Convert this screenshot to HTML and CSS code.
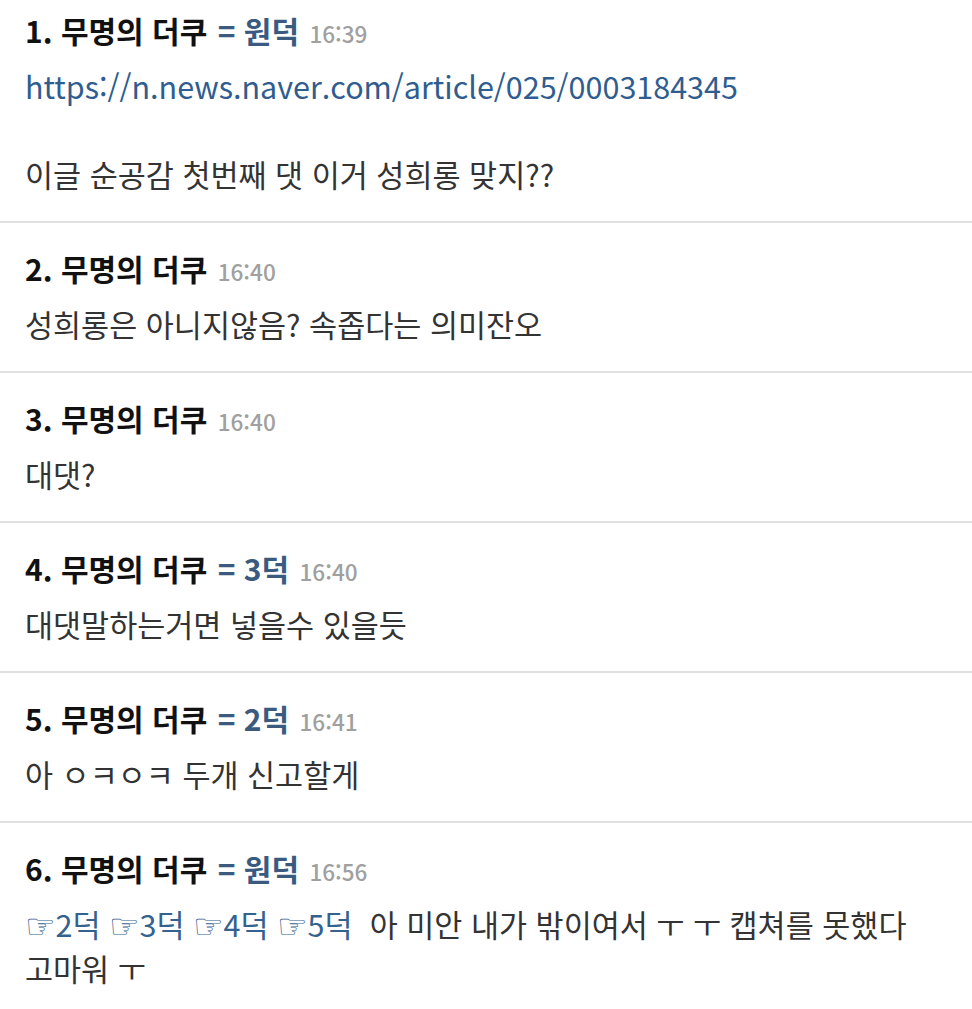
FILE: index.html
```html
<!DOCTYPE html>
<html lang="ko">
<head>
<meta charset="utf-8">
<link rel="stylesheet" href="styles.css">
</head>
<body>
<div class="list">
  <div class="post">
    <div class="head"><span class="no">1. 무명의 더쿠</span> <span class="nick">= 원덕</span> <span class="time">16:39</span></div>
    <div class="body">
      <a class="link" href="#">https://n.news.naver.com/article/025/0003184345</a><br><br>
      이글 순공감 첫번째 댓 이거 성희롱 맞지??
    </div>
  </div>
  <div class="post">
    <div class="head"><span class="no">2. 무명의 더쿠</span> <span class="time">16:40</span></div>
    <div class="body">성희롱은 아니지않음? 속좁다는 의미잔오</div>
  </div>
  <div class="post">
    <div class="head"><span class="no">3. 무명의 더쿠</span> <span class="time">16:40</span></div>
    <div class="body">대댓?</div>
  </div>
  <div class="post">
    <div class="head"><span class="no">4. 무명의 더쿠</span> <span class="nick">= 3덕</span> <span class="time">16:40</span></div>
    <div class="body">대댓말하는거면 넣을수 있을듯</div>
  </div>
  <div class="post">
    <div class="head"><span class="no">5. 무명의 더쿠</span> <span class="nick">= 2덕</span> <span class="time">16:41</span></div>
    <div class="body">아 ㅇㅋㅇㅋ 두개 신고할게</div>
  </div>
  <div class="post">
    <div class="head"><span class="no">6. 무명의 더쿠</span> <span class="nick">= 원덕</span> <span class="time">16:56</span></div>
    <div class="body"><span class="ref"><span class="hand">☞</span>2덕</span> <span class="ref"><span class="hand">☞</span>3덕</span> <span class="ref"><span class="hand">☞</span>4덕</span> <span class="ref"><span class="hand">☞</span>5덕</span>&nbsp; 아 미안 내가 밖이여서 ㅜ ㅜ 캡쳐를 못했다<br>고마워 ㅜ</div>
  </div>
</div>
</body>
</html>
```
FILE: styles.css
```css
html, body {
  margin: 0;
  padding: 0;
  background: #fff;
}
body {
  font-family: "Noto Sans CJK KR", "Noto Sans", sans-serif;
  color: #333;
  width: 972px;
  overflow: hidden;
}
.post {
  padding: 25px 25px 25px;
  border-bottom: 2px solid #e0e0e0;
}
.post:first-child {
  padding-top: 10px;
}
.post:last-child {
  border-bottom: none;
}
.head {
  font-size: 30px;
  line-height: 40px;
  height: 40px;
  font-weight: 700;
  margin-bottom: 14px;
  white-space: nowrap;
}
.no {
  color: #111;
}
.nick {
  color: #3b5a80;
  margin-left: 2px;
}
.time {
  color: #a0a0a0;
  font-size: 22.5px;
  font-weight: 500;
  margin-left: 2px;
}
.body {
  font-size: 30.5px;
  line-height: 44px;
  color: #333;
}
.link {
  color: #2f5d8f;
  text-decoration: none;
}
.ref {
  color: #34628f;
}
.hand {
  font-family: "DejaVu Sans", sans-serif;
  font-size: 34px;
  line-height: 1;
  vertical-align: -1px;
}
```
